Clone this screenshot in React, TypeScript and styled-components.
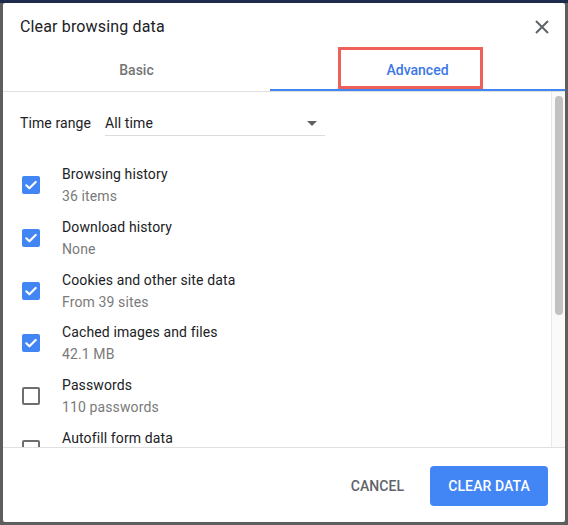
import React from "react";
import styled, { createGlobalStyle } from "styled-components";

const Global = createGlobalStyle`
  html, body { margin: 0; padding: 0; }
  body {
    background: linear-gradient(#1e2c4c 0 3px, #5e5e5e 3px);
    font-family: Roboto, "Liberation Sans", Arial, sans-serif;
    -webkit-font-smoothing: antialiased;
  }
  * { box-sizing: border-box; }
`;

const Backdrop = styled.div`
  width: 568px;
  height: 525px;
  padding: 3px;
`;

const Dialog = styled.div`
  position: relative;
  width: 562px;
  height: 519px;
  background: #ffffff;
  border-radius: 2px;
  display: flex;
  flex-direction: column;
  overflow: hidden;
`;

const Header = styled.div`
  height: 45px;
  display: flex;
  justify-content: space-between;
  align-items: flex-start;
  padding: 0 11px 0 17px;
`;

const Title = styled.h2`
  margin: 14px 0 0;
  font-size: 16px;
  line-height: 20px;
  font-weight: 400;
  letter-spacing: 0.15px;
  color: #202124;
`;

const CloseButton = styled.button`
  margin-top: 11.5px;
  width: 24px;
  height: 24px;
  padding: 0;
  border: none;
  background: transparent;
  display: flex;
  align-items: center;
  justify-content: center;
  cursor: pointer;
`;

const TabBar = styled.div`
  display: grid;
  grid-template-columns: 267px 1fr;
  border-bottom: 1px solid #e0e0e0;
`;

const Tab = styled.div<{ $active?: boolean }>`
  height: 43px;
  display: flex;
  align-items: center;
  justify-content: center;
  font-size: 14px;
  font-weight: 500;
  color: ${(p) => (p.$active ? "#3b78e7" : "#757575")};
  box-shadow: ${(p) => (p.$active ? "inset 0 -2px 0 #4285f4" : "none")};
`;

const Highlight = styled.div`
  position: absolute;
  left: 335px;
  top: 44px;
  width: 145px;
  height: 42px;
  border: 3px solid #ef6158;
  pointer-events: none;
`;

const ScrollRegion = styled.div`
  height: 355px;
  display: flex;
`;

const ScrollContent = styled.div`
  flex: 1;
  overflow: hidden;
  padding: 23px 0 0 17px;
`;

const ScrollTrack = styled.div`
  width: 14px;
  background: #fafafa;
  border-left: 1px solid #e8e8e8;
  padding: 4px 0 0 3px;
`;

const ScrollThumb = styled.div`
  width: 8px;
  height: 219px;
  border-radius: 4px;
  background: #c2c2c2;
`;

const TimeRow = styled.div`
  display: flex;
  align-items: flex-start;
  font-size: 14px;
  letter-spacing: 0.1px;
  color: #202124;
`;

const TimeLabel = styled.span`
  margin-right: 14px;
  line-height: normal;
`;

const Select = styled.div`
  width: 220px;
  display: flex;
  align-items: center;
  justify-content: space-between;
  padding: 0 8px 4px 0;
  border-bottom: 1px solid #dcdcdc;
  line-height: normal;
`;

const ItemList = styled.div`
  margin-top: 28px;
  display: flex;
  flex-direction: column;
  gap: 10.75px;
`;

const Item = styled.div`
  display: flex;
  align-items: flex-start;
  gap: 22px;
`;

const Box = styled.span<{ $checked: boolean }>`
  margin: 12px 0 0 2px;
  width: 18px;
  height: 18px;
  flex: none;
  border-radius: 2px;
  display: flex;
  align-items: center;
  justify-content: center;
  background: ${(p) => (p.$checked ? "#4285f4" : "transparent")};
  border: ${(p) => (p.$checked ? "none" : "2px solid #6e6e6e")};
`;

const ItemText = styled.div`
  display: flex;
  flex-direction: column;
  letter-spacing: 0.12px;
`;

const ItemTitle = styled.span`
  font-size: 14px;
  line-height: 20px;
  color: #202124;
`;

const ItemSub = styled.span`
  margin-top: 2px;
  font-size: 14px;
  line-height: 20px;
  color: #7a7a7a;
`;

const Footer = styled.div`
  height: 75px;
  border-top: 1px solid #e0e0e0;
  display: flex;
  justify-content: flex-end;
  align-items: flex-start;
  gap: 10px;
  padding: 18px 17px 0;
`;

const TextButton = styled.button`
  height: 40px;
  padding: 0 16px;
  border: none;
  background: transparent;
  font-family: inherit;
  font-size: 14px;
  font-weight: 500;
  letter-spacing: 0.1px;
  color: #5f6368;
  cursor: pointer;
`;

const PrimaryButton = styled.button`
  height: 40px;
  padding: 0 18px;
  border: none;
  border-radius: 4px;
  background: #4285f4;
  font-family: inherit;
  font-size: 14px;
  font-weight: 500;
  letter-spacing: 0.1px;
  color: #ffffff;
  cursor: pointer;
`;

const items = [
  { title: "Browsing history", sub: "36 items", checked: true },
  { title: "Download history", sub: "None", checked: true },
  { title: "Cookies and other site data", sub: "From 39 sites", checked: true },
  { title: "Cached images and files", sub: "42.1 MB", checked: true },
  { title: "Passwords", sub: "110 passwords", checked: false },
  { title: "Autofill form data", sub: "", checked: false },
];

function Check({ checked }: { checked: boolean }) {
  return (
    <Box $checked={checked}>
      {checked && (
        <svg width="18" height="18" viewBox="0 0 18 18">
          <path d="M4.3 9.3 L7.4 12.3 L13.7 6" fill="none" stroke="#fff" strokeWidth="2.2" strokeLinecap="round" strokeLinejoin="round" />
        </svg>
      )}
    </Box>
  );
}

export default function App() {
  return (
    <>
      <Global />
      <Backdrop>
        <Dialog>
          <Header>
            <Title>Clear browsing data</Title>
            <CloseButton aria-label="Close">
              <svg width="24" height="24" viewBox="0 0 24 24">
                <path d="M6 6 L18 18 M18 6 L6 18" stroke="#5f6368" strokeWidth="2" fill="none" />
              </svg>
            </CloseButton>
          </Header>
          <TabBar>
            <Tab>Basic</Tab>
            <Tab $active>Advanced</Tab>
          </TabBar>
          <ScrollRegion>
            <ScrollContent>
              <TimeRow>
                <TimeLabel>Time range</TimeLabel>
                <Select>
                  <span>All time</span>
                  <svg width="10" height="5" viewBox="0 0 10 5">
                    <path d="M0 0 L10 0 L5 5 Z" fill="#616161" />
                  </svg>
                </Select>
              </TimeRow>
              <ItemList>
                {items.map((it) => (
                  <Item key={it.title}>
                    <Check checked={it.checked} />
                    <ItemText>
                      <ItemTitle>{it.title}</ItemTitle>
                      {it.sub && <ItemSub>{it.sub}</ItemSub>}
                    </ItemText>
                  </Item>
                ))}
              </ItemList>
            </ScrollContent>
            <ScrollTrack>
              <ScrollThumb />
            </ScrollTrack>
          </ScrollRegion>
          <Footer>
            <TextButton>CANCEL</TextButton>
            <PrimaryButton>CLEAR DATA</PrimaryButton>
          </Footer>
          <Highlight />
        </Dialog>
      </Backdrop>
    </>
  );
}
